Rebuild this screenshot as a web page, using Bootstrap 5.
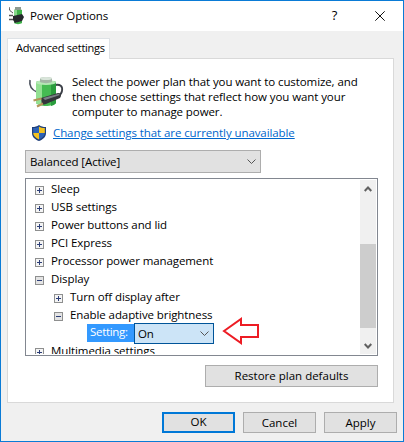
<!DOCTYPE html>
<html lang="en">
<head>
  <meta charset="UTF-8" />
  <title>Power Options</title>
  <link href="https://cdn.jsdelivr.net/npm/bootstrap@5.3.3/dist/css/bootstrap.min.css" rel="stylesheet">
  <style>
    body { margin: 0; background: #f0f0f0; font-family: "Open Sans", "Liberation Sans", sans-serif; font-size: 11.5px; letter-spacing: -.09px; color: #000; line-height: 15px; }
    .dlg { width: 404px; height: 442px; border: 1px solid #0a7bd6; background: #f0f0f0; position: relative; overflow: hidden; }
    .dlg-title { height: 30px; background: #fff; padding-left: 8px; }
    .dlg-title .cap { margin-left: 4px; padding-bottom: 1px; }
    .cap-help { width: 45px; text-align: center; font-size: 13px; padding-bottom: 2px; }
    .cap-close { width: 46px; height: 30px; }
    .dlg-body { padding: 7px 0 0 6px; }
    .dlg-tabs { border: 0; position: relative; z-index: 2; height: 21px; }
    .dlg-tabs .nav-link { width: 103px; height: 21px; padding: 1px 0 0 8px; margin: 0; border: 1px solid #d9d9d9; border-bottom: 0; border-radius: 0; background: #fff; color: #000; font-size: 11px; letter-spacing: -.25px; line-height: 15px; white-space: nowrap; }
    .dlg-panel { width: 387px; height: 345px; margin-top: -1px; background: #fff; border: 1px solid #d9d9d9; padding: 15px 15px 0 17px; }
    .intro-ico { width: 47px; flex: none; }
    .intro-ico svg { display: block; margin: 1px 0 0 1px; }
    .change-row { height: 16px; margin-top: 6px; }
    .change-row svg { margin: 0 7px; flex: none; }
    .change-row a { color: #0066cc; padding-bottom: 1px; }
    .combo { width: 236px; height: 23px; margin-top: 9px; background: #e1e1e1; border: 1px solid #adadad; padding: 0 4px; }
    .tree-box { height: 178px; margin-top: 5px; border: 1px solid #828790; padding: 1px 1px 1px 0; background: #fff; }
    .tree-list { height: 174px; overflow: hidden; margin: 0; padding: 0 0 0 9px; list-style: none; }
    .tree-row { height: 18px; padding-bottom: 2px; }
    .tree-row > svg { flex: none; margin: 5px 7px 0 0; }
    .tree-sub { padding-left: 19px; }
    .set-label { background: #3399ff; color: #fff; width: 47px; height: 18px; margin-left: 52px; padding-left: 3px; flex: none; letter-spacing: -.3px; }
    .set-combo { width: 80px; height: 21px; margin: -1px 0 -2px; background: #cce4f7; border: 1px solid #005499; padding: 0 4px 0 3px; flex: none; }
    .vscroll { width: 16px; height: 174px; background: #f0f0f0; flex: none; }
    .vscroll-arrow { height: 17px; }
    .vscroll-thumb { height: 84px; margin: 47px 0 9px; background: #cdcdcd; }
    .win-btn { height: 21px; background: #e1e1e1; border: 1px solid #adadad; border-radius: 0; padding: 0 0 1px; color: #000; font-size: 11.5px; line-height: 15px; }
    .win-btn.btn-ok { border: 2px solid #0078d7; line-height: 14px; }
    .restore-btn { width: 173px; height: 22px; margin-top: 9px; }
    .dlg-actions { width: 390px; gap: 8px; margin-top: 9px; }
    .dlg-actions .win-btn { width: 73px; }
    .red-arrow { position: absolute; left: 220px; top: 315px; }
  </style>
</head>
<body>
  <svg width="0" height="0" class="position-absolute">
    <symbol id="plus" viewBox="0 0 9 9">
      <rect x=".5" y=".5" width="8" height="8" fill="#f4f4f4" stroke="#8e8f8f"/>
      <path d="M2 4.500h5M4.500 2v5" stroke="#2c3e77"/>
    </symbol>
    <symbol id="minus" viewBox="0 0 9 9">
      <rect x=".5" y=".5" width="8" height="8" fill="#e4e4e4" stroke="#8e8f8f"/>
      <path d="M2 4.500h5" stroke="#2c3e77"/>
    </symbol>
  </svg>

  <div class="dlg">
    <div class="dlg-title d-flex align-items-center">
      <svg width="17" height="18" viewBox="0 0 17 18">
        <path d="M0 0C0 3 2 5 4 6" fill="none" stroke="#444"/>
        <path d="M5 3c1-1 7-1 8 0v13c-2 1.500-6 1.500-8 0z" fill="#3fb34a"/>
        <path d="M5 3c1-1 2-1 3-1v14l-3-1z" fill="#86d88a"/>
        <rect x="6" y="0" width="6" height="3" fill="#8d9a90"/>
        <path d="M4 9l9-2 2 3-2 4-7 2-2-3z" fill="#26282c"/>
        <path d="M0 8.500h4M0 12.500h4" stroke="#555" stroke-width="1.500"/>
      </svg>
      <span class="cap flex-grow-1">Power Options</span>
      <span class="cap-help">?</span>
      <span class="cap-close d-flex align-items-center justify-content-center">
        <svg width="10" height="10" viewBox="0 0 10 10"><path d="M.3.3l9.400 9.400M9.700.3L.3 9.700" stroke="#111" fill="none"/></svg>
      </span>
    </div>

    <div class="dlg-body">
      <ul class="nav nav-tabs dlg-tabs">
        <li class="nav-item"><a class="nav-link active" href="#">Advanced settings</a></li>
      </ul>

      <div class="dlg-panel">
        <div class="d-flex">
          <div class="intro-ico">
            <svg width="40" height="36" viewBox="0 0 40 36">
              <path d="M4 5C3 11 6 15 11 17" fill="none" stroke="#4d535e" stroke-width="1.600"/>
              <path d="M29 10c5-1 8 1 7 6-.5 3-2 4-4 5" fill="none" stroke="#3c4048" stroke-width="1.800"/>
              <path d="M10 7c3-2 17-2 20 0v21c-3 4-17 4-20 0z" fill="#45bb52"/>
              <path d="M10 7c2-1 4-1 6-1v25c-2-.5-4-1.500-6-3z" fill="#93e092"/>
              <path d="M25 6l5 1v21c-1 1.500-3 2.500-5 3z" fill="#2a9c3d"/>
              <ellipse cx="20" cy="7.500" rx="10" ry="2.600" fill="#b5e8b5"/>
              <path d="M14 3c3-1.500 9-1.500 12 0v4c-3 1.500-9 1.500-12 0z" fill="#a4b6a6"/>
              <ellipse cx="20" cy="3.500" rx="6" ry="1.600" fill="#d9e5da"/>
              <path d="M15 23l17-5c2 0 3 1 3 3l-1 2-14 6-4 1z" fill="#33363b"/>
              <path d="M17 23l15-4c1 0 1.500 .5 2 1l-15 5z" fill="#7b8087"/>
              <path d="M7.500 25.500l8-2M11 31.500l6-3" stroke="#b4945a" stroke-width="2.200"/>
            </svg>
          </div>
          <div>Select the power plan that you want to customize, and<br>then choose settings that reflect how you want your<br>computer to manage power.</div>
        </div>

        <div class="change-row d-flex align-items-center">
          <svg width="14" height="16" viewBox="0 0 14 16">
            <path d="M7 0c2 1.500 4 2 7 2v6c0 4-3 6.500-7 8-4-1.500-7-4-7-8V2c3 0 5-.5 7-2z" fill="#1f3f7a"/>
            <path d="M7 1.500V8h5.800V3C10.500 3 8.500 2.500 7 1.500z" fill="#f3c21f"/>
            <path d="M7 8H1.200c0 3 2.500 5 5.800 6.500z" fill="#f3c21f"/>
            <path d="M7 1.500C5.500 2.500 3.500 3 1.200 3v5H7z" fill="#2d62b5"/>
            <path d="M7 8v6.500c3.300-1.500 5.800-3.500 5.800-6.500z" fill="#2d62b5"/>
          </svg>
          <a href="#">Change settings that are currently unavailable</a>
        </div>

        <div class="combo d-flex align-items-center justify-content-between">
          <span>Balanced [Active]</span>
          <svg width="9" height="5" viewBox="0 0 9 5"><path d="M.5.5l4 4 4-4" fill="none" stroke="#555"/></svg>
        </div>

        <div class="tree-box d-flex">
          <ul class="tree-list flex-grow-1">
            <li class="tree-row d-flex align-items-center"><svg width="9" height="9"><use href="#plus"/></svg>Sleep</li>
            <li class="tree-row d-flex align-items-center"><svg width="9" height="9"><use href="#plus"/></svg>USB settings</li>
            <li class="tree-row d-flex align-items-center"><svg width="9" height="9"><use href="#plus"/></svg>Power buttons and lid</li>
            <li class="tree-row d-flex align-items-center"><svg width="9" height="9"><use href="#plus"/></svg>PCI Express</li>
            <li class="tree-row d-flex align-items-center"><svg width="9" height="9"><use href="#plus"/></svg>Processor power management</li>
            <li class="tree-row d-flex align-items-center"><svg width="9" height="9"><use href="#minus"/></svg>Display</li>
            <li class="tree-row tree-sub d-flex align-items-center"><svg width="9" height="9"><use href="#plus"/></svg>Turn off display after</li>
            <li class="tree-row tree-sub d-flex align-items-center"><svg width="9" height="9"><use href="#minus"/></svg>Enable adaptive brightness</li>
            <li class="tree-row d-flex align-items-start">
              <span class="set-label">Setting:</span>
              <span class="set-combo d-flex align-items-center justify-content-between">
                <span>On</span>
                <svg width="9" height="5" viewBox="0 0 9 5"><path d="M.5.5l4 4 4-4" fill="none" stroke="#555"/></svg>
              </span>
            </li>
            <li class="tree-row d-flex align-items-center"><svg width="9" height="9"><use href="#plus"/></svg>Multimedia settings</li>
          </ul>
          <div class="vscroll">
            <div class="vscroll-arrow d-flex align-items-center justify-content-center">
              <svg width="8" height="6" viewBox="0 0 8 6"><path d="M.7 5L4 1.500 7.300 5" fill="none" stroke="#606060" stroke-width="2"/></svg>
            </div>
            <div class="vscroll-thumb"></div>
            <div class="vscroll-arrow d-flex align-items-center justify-content-center">
              <svg width="8" height="6" viewBox="0 0 8 6"><path d="M.7 1L4 4.500 7.300 1" fill="none" stroke="#606060" stroke-width="2"/></svg>
            </div>
          </div>
        </div>

        <div class="d-flex justify-content-end">
          <button type="button" class="btn win-btn restore-btn">Restore plan defaults</button>
        </div>
      </div>

      <div class="dlg-actions d-flex justify-content-end">
        <button type="button" class="btn win-btn btn-ok">OK</button>
        <button type="button" class="btn win-btn">Cancel</button>
        <button type="button" class="btn win-btn">Apply</button>
      </div>
    </div>

    <svg class="red-arrow" width="40" height="30" viewBox="0 0 40 30">
      <path d="M3 15L20 3v6h17v12H20v6z" fill="none" stroke="#ed1c24" stroke-width="2"/>
    </svg>
  </div>

  <script src="https://cdn.jsdelivr.net/npm/bootstrap@5.3.3/dist/js/bootstrap.bundle.min.js"></script>
</body>
</html>
